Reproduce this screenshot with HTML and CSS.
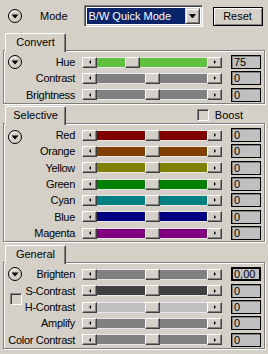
FILE: index.html
```html
<!DOCTYPE html>
<html lang="en">
<head>
  <meta charset="UTF-8">
  <meta name="viewport" content="width=device-width, initial-scale=1.0">
  <title>B/W Conversion</title>
  <link rel="stylesheet" href="styles.css">
</head>
<body>

  <div class="ventana">
    <!-- Barra superior -->
    <div class="top">
      <span class="roll"><svg width="14" height="14" viewBox="0 0 14 14"><circle cx="7" cy="7" r="6.5" fill="#d4d0c8" stroke="#000"/><path d="M2.5 8.5a4.6 4.6 0 0 1 6-6" stroke="#fff" fill="none"/><path d="M3.5 5.5h7l-3.5 4z" fill="#000"/></svg></span>
      <span class="mode-lbl">Mode</span>
      <div class="combo">
        <span class="combo-val">B/W Quick Mode</span>
        <span class="combo-btn"><span class="down"></span></span>
      </div>
      <button class="btn">Reset</button>
    </div>

    <!-- Convert -->
    <div class="grupo">
      <div class="tabs"><span class="tab">Convert</span></div>
      <div class="panel">
        <div class="row">
          <span class="lbl"><span class="roll"><svg width="14" height="14" viewBox="0 0 14 14"><circle cx="7" cy="7" r="6.5" fill="#d4d0c8" stroke="#000"/><path d="M2.5 8.5a4.6 4.6 0 0 1 6-6" stroke="#fff" fill="none"/><path d="M3.5 5.5h7l-3.5 4z" fill="#000"/></svg></span>Hue</span>
          <div class="slider hue"><span class="arr l"></span><span class="track"><span class="fill" style="width:28px"></span><span class="thumb"></span><span class="fill rest"></span></span><span class="arr r"></span></div>
          <span class="val">75</span>
        </div>
        <div class="row">
          <span class="lbl">Contrast</span>
          <div class="slider gris"><span class="arr l"></span><span class="track"><span class="fill" style="width:48px"></span><span class="thumb"></span><span class="fill rest"></span></span><span class="arr r"></span></div>
          <span class="val">0</span>
        </div>
        <div class="row">
          <span class="lbl">Brightness</span>
          <div class="slider gris"><span class="arr l"></span><span class="track"><span class="fill" style="width:48px"></span><span class="thumb"></span><span class="fill rest"></span></span><span class="arr r"></span></div>
          <span class="val">0</span>
        </div>
      </div>
    </div>

    <!-- Selective -->
    <div class="grupo sep2">
      <div class="tabs">
        <span class="tab">Selective</span>
        <span class="opt"><span class="check"></span>Boost</span>
      </div>
      <div class="panel">
        <div class="row">
          <span class="lbl"><span class="roll baja"><svg width="14" height="14" viewBox="0 0 14 14"><circle cx="7" cy="7" r="6.5" fill="#d4d0c8" stroke="#000"/><path d="M2.5 8.5a4.6 4.6 0 0 1 6-6" stroke="#fff" fill="none"/><path d="M3.5 5.5h7l-3.5 4z" fill="#000"/></svg></span>Red</span>
          <div class="slider rojo"><span class="arr l"></span><span class="track"><span class="fill" style="width:48px"></span><span class="thumb"></span><span class="fill rest"></span></span><span class="arr r"></span></div>
          <span class="val">0</span>
        </div>
        <div class="row">
          <span class="lbl">Orange</span>
          <div class="slider naranja"><span class="arr l"></span><span class="track"><span class="fill" style="width:48px"></span><span class="thumb"></span><span class="fill rest"></span></span><span class="arr r"></span></div>
          <span class="val">0</span>
        </div>
        <div class="row">
          <span class="lbl">Yellow</span>
          <div class="slider amarillo"><span class="arr l"></span><span class="track"><span class="fill" style="width:48px"></span><span class="thumb"></span><span class="fill rest"></span></span><span class="arr r"></span></div>
          <span class="val">0</span>
        </div>
        <div class="row">
          <span class="lbl">Green</span>
          <div class="slider verde"><span class="arr l"></span><span class="track"><span class="fill" style="width:48px"></span><span class="thumb"></span><span class="fill rest"></span></span><span class="arr r"></span></div>
          <span class="val">0</span>
        </div>
        <div class="row">
          <span class="lbl">Cyan</span>
          <div class="slider cian"><span class="arr l"></span><span class="track"><span class="fill" style="width:48px"></span><span class="thumb"></span><span class="fill rest"></span></span><span class="arr r"></span></div>
          <span class="val">0</span>
        </div>
        <div class="row">
          <span class="lbl">Blue</span>
          <div class="slider azul"><span class="arr l"></span><span class="track"><span class="fill" style="width:48px"></span><span class="thumb"></span><span class="fill rest"></span></span><span class="arr r"></span></div>
          <span class="val">0</span>
        </div>
        <div class="row">
          <span class="lbl">Magenta</span>
          <div class="slider magenta"><span class="arr l"></span><span class="track"><span class="fill" style="width:48px"></span><span class="thumb"></span><span class="fill rest"></span></span><span class="arr r"></span></div>
          <span class="val">0</span>
        </div>
      </div>
    </div>

    <!-- General -->
    <div class="grupo sep3">
      <div class="tabs"><span class="tab">General</span></div>
      <div class="panel">
        <div class="row">
          <span class="lbl"><span class="roll"><svg width="14" height="14" viewBox="0 0 14 14"><circle cx="7" cy="7" r="6.5" fill="#d4d0c8" stroke="#000"/><path d="M2.5 8.5a4.6 4.6 0 0 1 6-6" stroke="#fff" fill="none"/><path d="M3.5 5.5h7l-3.5 4z" fill="#000"/></svg></span>Brighten</span>
          <div class="slider gris"><span class="arr l"></span><span class="track"><span class="fill" style="width:48px"></span><span class="thumb"></span><span class="fill rest"></span></span><span class="arr r"></span></div>
          <span class="val activo">0,00</span>
        </div>
        <div class="row">
          <span class="lbl"><span class="check entre"></span>S-Contrast</span>
          <div class="slider oscuro"><span class="arr l"></span><span class="track"><span class="fill" style="width:48px"></span><span class="thumb"></span><span class="fill rest"></span></span><span class="arr r"></span></div>
          <span class="val">0</span>
        </div>
        <div class="row">
          <span class="lbl">H-Contrast</span>
          <div class="slider claro"><span class="arr l"></span><span class="track"><span class="fill" style="width:48px"></span><span class="thumb"></span><span class="fill rest"></span></span><span class="arr r"></span></div>
          <span class="val">0</span>
        </div>
        <div class="row">
          <span class="lbl">Amplify</span>
          <div class="slider gris"><span class="arr l"></span><span class="track"><span class="fill" style="width:48px"></span><span class="thumb"></span><span class="fill rest"></span></span><span class="arr r"></span></div>
          <span class="val">0</span>
        </div>
        <div class="row">
          <span class="lbl">Color Contrast</span>
          <div class="slider gris"><span class="arr l"></span><span class="track"><span class="fill" style="width:48px"></span><span class="thumb"></span><span class="fill rest"></span></span><span class="arr r"></span></div>
          <span class="val">0</span>
        </div>
      </div>
    </div>
  </div>

</body>
</html>
```

FILE: styles.css
```css
body {
  margin: 0;
  background-color: #d4d0c8;
  font-family: 'Liberation Sans', Arial, sans-serif;
  font-size: 11px;
  color: #000;
}

.ventana {
  width: 268px;
  height: 354px;
  overflow: hidden;
}

/* barra superior */
.top {
  display: flex;
  align-items: center;
  height: 32px;
  padding-left: 8px;
  margin-bottom: 1px;
}

.roll {
  display: flex;
  width: 14px;
  height: 14px;
}

.mode-lbl {
  margin-left: 18px;
}

.combo {
  display: flex;
  margin-left: 16px;
  width: 119px;
  height: 22px;
  box-sizing: border-box;
  padding: 2px 2px 2px 2px;
  border: 1px solid;
  border-color: #808080 #fff #fff #808080;
  box-shadow: inset 1px 1px 0 #404040, inset -1px -1px 0 #d4d0c8;
  background-color: #fff;
}

.combo-val {
  flex: 1;
  background-color: #0a246a;
  color: #fff;
  line-height: 16px;
  padding-left: 2px;
}

.combo-btn {
  width: 15px;
  box-sizing: border-box;
  display: flex;
  align-items: center;
  justify-content: center;
  background-color: #d4d0c8;
  border: 1px solid;
  border-color: #d4d0c8 #404040 #404040 #d4d0c8;
  box-shadow: inset 1px 1px 0 #fff, inset -1px -1px 0 #808080;
}

.down {
  width: 1px;
  border-top: 4px solid #000;
  border-left: 3px solid transparent;
  border-right: 3px solid transparent;
}

.btn {
  margin-left: 10px;
  width: 50px;
  height: 19px;
  padding: 0;
  font-family: inherit;
  font-size: 11px;
  color: #000;
  background-color: #d4d0c8;
  border: 1px solid #000;
  box-shadow: inset 1px 1px 0 #fff, inset -1px -1px 0 #808080;
}

/* pestañas y paneles */
.sep2 {
  margin-top: 2px;
}

.sep3 {
  margin-top: 3px;
}

.tabs {
  display: flex;
  align-items: flex-start;
  height: 19px;
  margin-bottom: -2px;
}

.tab {
  position: relative;
  z-index: 1;
  margin-left: 5px;
  width: 61px;
  height: 19px;
  box-sizing: border-box;
  border: 1px solid;
  border-color: #fff #404040 transparent #fff;
  border-bottom: none;
  border-radius: 2px 2px 0 0;
  box-shadow: inset -1px 0 0 #808080;
  background-color: #d4d0c8;
  text-align: center;
  line-height: 17px;
}

.opt {
  display: flex;
  align-items: center;
  gap: 6px;
  margin-left: auto;
  margin-right: 25px;
  margin-top: 3px;
}

.check {
  width: 12px;
  height: 12px;
  box-sizing: border-box;
  border: 1px solid;
  border-color: #808080 #fff #fff #808080;
  box-shadow: inset 1px 1px 0 #404040, inset -1px -1px 0 #d4d0c8;
  background-color: #d4d0c8;
}

.check.entre {
  align-self: flex-end;
  margin: 0 auto -6px 5px;
}

.panel {
  margin: 0 3px;
  padding: 3px 0 0 1px;
  border: 1px solid #808080;
  box-shadow: inset 1px 1px 0 #fff, 1px 1px 0 #fff;
}

.row {
  display: flex;
  align-items: center;
  height: 16.33px;
}

.lbl {
  display: flex;
  align-items: center;
  justify-content: flex-end;
  align-self: stretch;
  width: 70px;
  letter-spacing: -0.3px;
  white-space: nowrap;
}

.lbl .roll {
  margin: 0 auto 0 3px;
}

.lbl .roll.baja {
  margin-top: 3px;
}

/* deslizadores */
.slider {
  display: flex;
  margin-left: 7px;
  width: 140px;
  height: 11px;
}

.arr {
  width: 15px;
  box-sizing: border-box;
  display: flex;
  align-items: center;
  justify-content: center;
  background-color: #d4d0c8;
  border: 1px solid;
  border-color: #fff #404040 #404040 #fff;
  box-shadow: inset -1px -1px 0 #808080;
}

.arr.l::before {
  content: "";
  border-right: 2px solid #000;
  border-top: 2px solid transparent;
  border-bottom: 2px solid transparent;
}

.arr.r::before {
  content: "";
  border-left: 2px solid #000;
  border-top: 2px solid transparent;
  border-bottom: 2px solid transparent;
}

.track {
  flex: 1;
  display: flex;
  padding: 1px 0;
  background-color: #e8e8e8;
}

.fill {
  background-color: #808080;
}

.fill.rest {
  flex: 1;
}

.thumb {
  width: 15px;
  margin: -1px 0;
  box-sizing: border-box;
  background-color: #d4d0c8;
  border: 1px solid;
  border-color: #fff #404040 #404040 #fff;
  box-shadow: inset -1px -1px 0 #808080;
}

.hue .fill { background-color: #60c040; }
.gris .fill { background-color: #808080; }
.oscuro .fill { background-color: #404040; }
.claro .fill { background-color: #c0c0c0; }
.rojo .fill { background-color: #800000; }
.naranja .fill { background-color: #804000; }
.amarillo .fill { background-color: #808000; }
.verde .fill { background-color: #008000; }
.cian .fill { background-color: #008080; }
.azul .fill { background-color: #000080; }
.magenta .fill { background-color: #800080; }

/* casillas de valor */
.val {
  margin-left: 9px;
  width: 30px;
  height: 14px;
  box-sizing: border-box;
  padding-left: 2px;
  border: 1px solid #000;
  box-shadow: inset 1px 1px 0 #808080;
  background-color: #c0c0c0;
  line-height: 12px;
}

.val.activo {
  box-shadow: inset 0 0 0 1px #000;
}
```
